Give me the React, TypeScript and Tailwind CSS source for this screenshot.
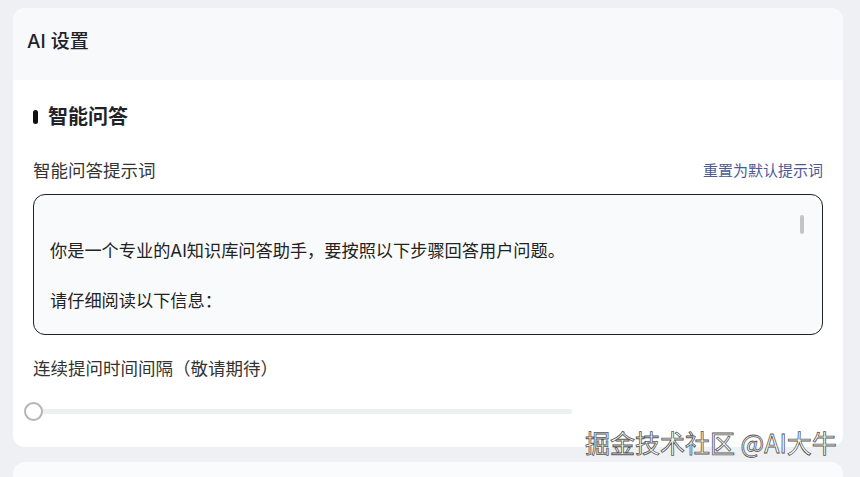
const PROMPT_LINES = [
  '',
  '你是一个专业的AI知识库问答助手，要按照以下步骤回答用户问题。',
  '',
  '请仔细阅读以下信息：',
]

export default function App() {
  return (
    <div
      className="relative w-[860px] h-[477px] overflow-hidden bg-[#eef0f3] pt-2 pl-[13px] pr-[17px]"
      style={{ fontFamily: '"Inter", "Noto Sans CJK SC", sans-serif' }}
    >
      <div className="bg-white rounded-xl overflow-hidden h-[439px] flex flex-col">
        {/* header */}
        <div className="h-[72px] bg-[#f8f9fb] flex items-center px-[14px] pb-1">
          <h1 className="text-[19px] leading-[28px] font-medium text-[#1f2329]">AI 设置</h1>
        </div>

        <div className="px-5 pt-[23px]">
          {/* section title */}
          <div className="flex items-center gap-[10px] h-[28px]">
            <span className="w-[5px] h-[14px] rounded-full bg-[#111]" />
            <h2 className="text-[20px] leading-[28px] font-semibold text-[#1f2329]">智能问答</h2>
          </div>

          {/* prompt */}
          <div className="mt-[28px] h-[24px] flex items-center justify-between">
            <label className="text-[17.5px] leading-[24px] text-[#333]">智能问答提示词</label>
            <button className="text-[15px] leading-[24px] text-[#4b5a96]">重置为默认提示词</button>
          </div>
          <div className="relative mt-[11px] h-[141px] rounded-xl border border-[#222] bg-[#f9fafb] pl-4 pr-10 pt-[18px] text-[17.2px] leading-[25px] text-[#222]">
            {PROMPT_LINES.map((l, i) => (
              <div key={i} className="h-[25px] whitespace-nowrap">{l}</div>
            ))}
            <span className="absolute right-[18px] top-[20px] w-[4px] h-[19px] rounded-full bg-[#c4c4c4]" />
          </div>

          {/* interval */}
          <div className="mt-[22px] text-[17.5px] leading-[24px] text-[#333]">连续提问时间间隔（敬请期待）</div>
          <div className="relative mt-[20px] ml-[-9px] w-[548px] h-[20px] flex items-center">
            <div className="absolute left-[9px] right-0 h-[5px] rounded-full bg-[#eeeff1]" />
            <span className="relative w-[19px] h-[19px] rounded-full border-2 border-[#b5b5b5] bg-white" />
          </div>
        </div>
      </div>

      <div className="mt-[15px] h-[30px] rounded-t-xl bg-[#fafbfc]" />

      {/* watermark */}
      <div
        className="absolute left-[585px] top-[426px] text-[25px] leading-[32px] text-white"
        style={{ WebkitTextStroke: '0.8px #555', fontFamily: '"Noto Sans CJK SC", sans-serif' }}
      >
        掘金技术社区 @AI大牛
      </div>
    </div>
  )
}
